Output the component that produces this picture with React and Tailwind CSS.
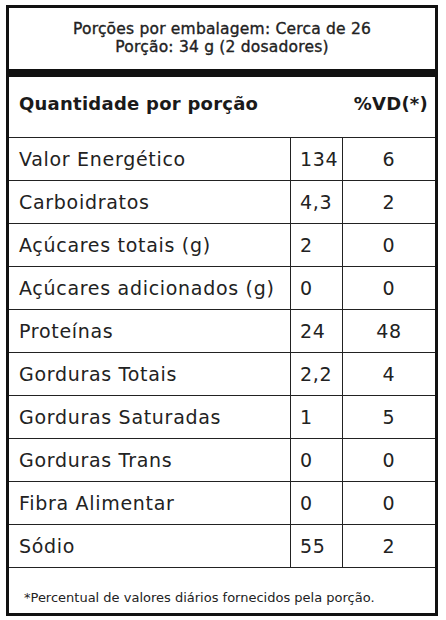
const rows = [
  ["Valor Energético", "134", "6"],
  ["Carboidratos", "4,3", "2"],
  ["Açúcares totais (g)", "2", "0"],
  ["Açúcares adicionados (g)", "0", "0"],
  ["Proteínas", "24", "48"],
  ["Gorduras Totais", "2,2", "4"],
  ["Gorduras Saturadas", "1", "5"],
  ["Gorduras Trans", "0", "0"],
  ["Fibra Alimentar", "0", "0"],
  ["Sódio", "55", "2"],
];

export default function App() {
  return (
    <div className="bg-white w-[446px] h-[620px] pt-[5px] pl-[6px] font-['DejaVu_Sans',sans-serif] text-[#222]">
      <div className="w-[432px] h-[611px] border-[3px] border-[#111] flex flex-col">
        <div className="h-[61px] flex flex-col items-center justify-center pb-[1px] text-[15.5px] tracking-[0.2px] leading-[18px] [-webkit-text-stroke:0.35px_#222]">
          <p>Porções por embalagem: Cerca de 26</p>
          <p>Porção: 34 g (2 dosadores)</p>
        </div>
        <div className="h-[8px] bg-[#111]" />
        <div className="h-[60px] flex items-center justify-between pl-[10px] pr-[7px] pb-[8px] font-bold text-[18px] tracking-[0.25px] text-[#1a1a1a]">
          <span>Quantidade por porção</span>
          <span>%VD(*)</span>
        </div>
        <div className="border-t border-[#222]">
          {rows.map(([label, value, vd]) => (
            <div key={label} className="grid grid-cols-[282px_52px_1fr] h-[43px] border-b border-[#222] text-[19px] tracking-[0.7px]">
              <div className="flex items-center pl-[10px] border-r border-[#222]">{label}</div>
              <div className="flex items-center pl-[9px] border-r border-[#222]">{value}</div>
              <div className="flex items-center justify-center">{vd}</div>
            </div>
          ))}
        </div>
        <div className="flex-1 flex items-end pb-[6px] pl-[15px] text-[13px] text-[#222]">
          *Percentual de valores diários fornecidos pela porção.
        </div>
      </div>
    </div>
  );
}
